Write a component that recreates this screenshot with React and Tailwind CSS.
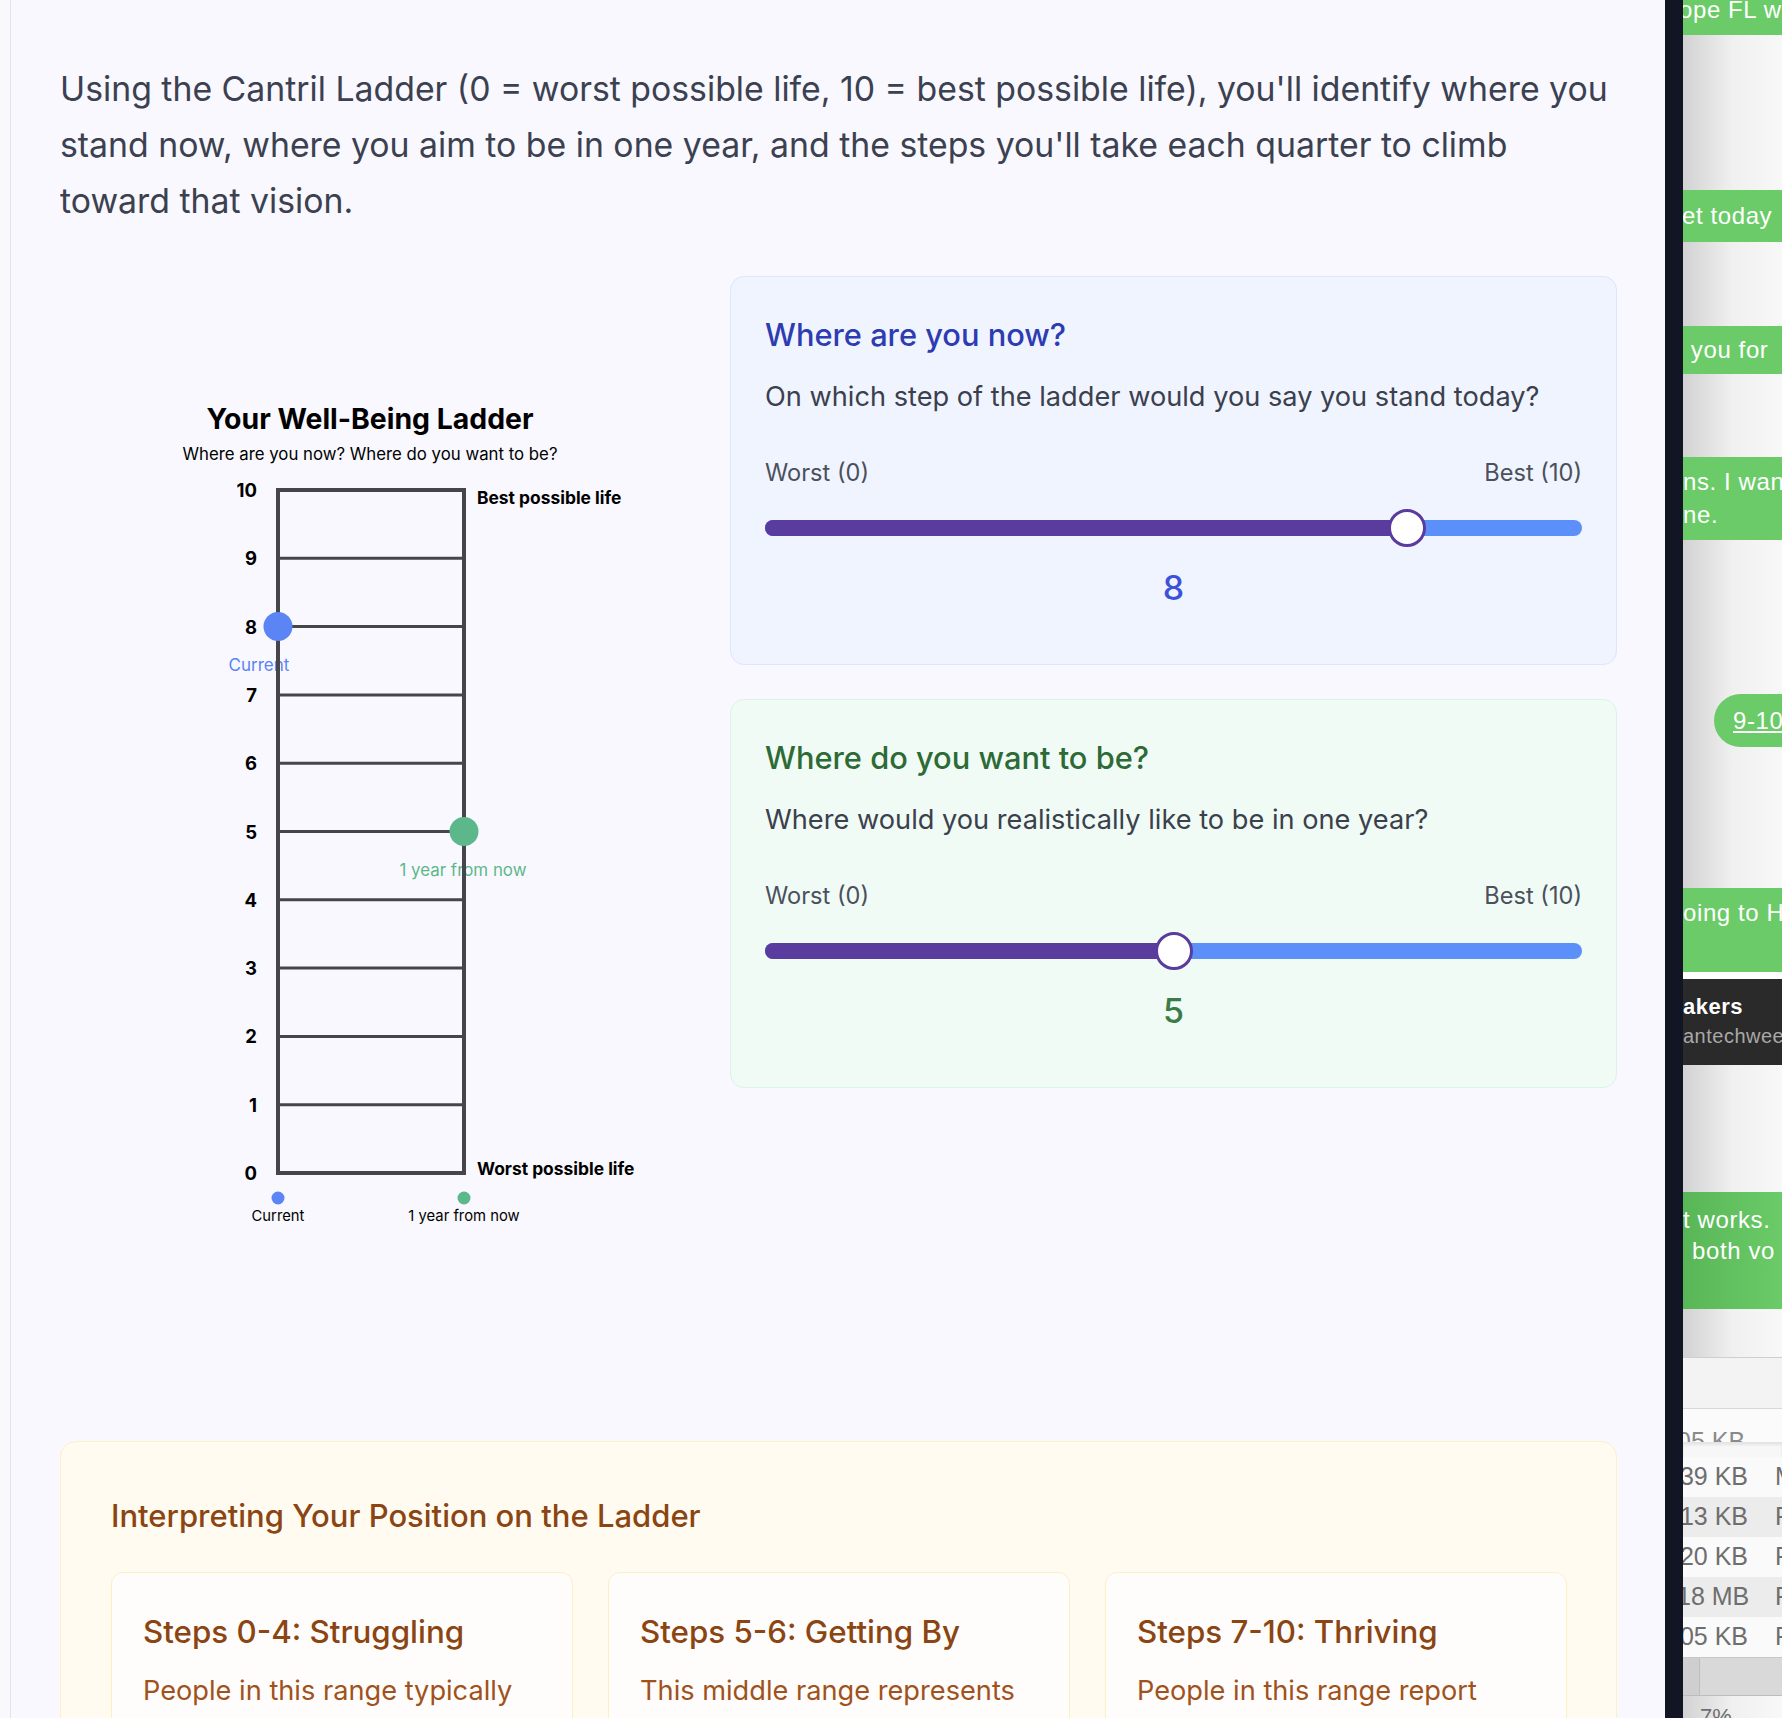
import React from "react";

const LEFT = 218;
const RIGHT = 404;
const TOP = 214;
const STEP = 68.3;
const INK = "#46464a";
const BLUE_DOT = "#5b84f4";
const GREEN_DOT = "#5cb88a";

function Ladder({ current, target }) {
  const y = (v) => TOP + (10 - v) * STEP;
  const steps = [0, 1, 2, 3, 4, 5, 6, 7, 8, 9, 10];
  return (
    <svg width="630" height="1117" viewBox="0 0 630 1117" className="block">
      <text x="310" y="142" textAnchor="middle" dominantBaseline="central" fontSize="28.4" fontWeight="700" fill="#000">Your Well-Being Ladder</text>
      <text x="310" y="178" textAnchor="middle" dominantBaseline="central" fontSize="16.8" fill="#000">Where are you now? Where do you want to be?</text>

      {steps.map((s) => (
        <text key={s} x="197" y={y(s)} textAnchor="end" dominantBaseline="central" fontSize="18.5" fontWeight="700" fill="#000">{s}</text>
      ))}

      {/* labels sit under the rails, as in the original */}
      <text x="199" y="389" textAnchor="middle" dominantBaseline="central" fontSize="17" fill={BLUE_DOT}>Current</text>
      <text x="403" y="594" textAnchor="middle" dominantBaseline="central" fontSize="16.9" fill={GREEN_DOT}>1 year from now</text>

      {steps.slice(1, 10).map((s) => (
        <line key={s} x1={LEFT} x2={RIGHT} y1={y(s)} y2={y(s)} stroke={INK} strokeWidth="3" />
      ))}
      <rect x={LEFT} y={TOP} width={RIGHT - LEFT} height={STEP * 10} fill="none" stroke={INK} strokeWidth="4" />

      <text x="417" y="221" dominantBaseline="central" fontSize="17.4" fontWeight="700" fill="#000">Best possible life</text>
      <text x="417" y="892" dominantBaseline="central" fontSize="17.4" fontWeight="700" fill="#000">Worst possible life</text>

      <circle cx={LEFT} cy={y(current)} r="14.5" fill={BLUE_DOT} />
      <circle cx={RIGHT} cy={y(target)} r="14.5" fill={GREEN_DOT} />

      <circle cx={LEFT} cy="922" r="6.5" fill={BLUE_DOT} />
      <text x={LEFT} y="940" textAnchor="middle" dominantBaseline="central" fontSize="14.8" fill="#000">Current</text>
      <circle cx={RIGHT} cy="922" r="6.5" fill={GREEN_DOT} />
      <text x={RIGHT} y="940" textAnchor="middle" dominantBaseline="central" fontSize="14.8" fill="#000">1 year from now</text>
    </svg>
  );
}

function Slider({ value }) {
  const pct = value / 10;
  // thumb travels inside the track like a native range input
  const left = `calc(${pct} * (100% - 38px))`;
  const fill = `calc(${pct} * (100% - 38px) + 19px)`;
  return (
    <div className="relative h-[38px]">
      <div className="absolute left-0 right-0 top-[11px] h-[16px] rounded-full bg-[#5b8ff9] overflow-hidden">
        <div className="h-full bg-[#5a3b9e]" style={{ width: fill }} />
      </div>
      <div className="absolute top-0 h-[38px] w-[38px] rounded-full bg-white border-[3.5px] border-[#5a3b9e]" style={{ left }} />
    </div>
  );
}

function QuestionCard({ tone, title, question, value }) {
  const styles = tone === "blue"
    ? { card: "bg-[#f0f4ff] border-[#dde6fd]", title: "text-[#2d3cb0]", value: "text-[#3b52d9]" }
    : { card: "bg-[#f0fbf5] border-[#daf4e6]", title: "text-[#2e6a36]", value: "text-[#3a7c45]" };
  return (
    <div className={`rounded-[14px] border-[1.5px] px-[34px] pt-[40px] pb-[56px] ${styles.card}`}>
      <h3 className={`text-[30.8px] leading-[36px] font-medium ${styles.title}`}>{title}</h3>
      <p className="mt-[24px] text-[27.2px] leading-[40px] text-[#3b404d]">{question}</p>
      <div className="mt-[40px] flex justify-between text-[23.6px] leading-[32px] text-[#4b505c]">
        <span>Worst (0)</span>
        <span>Best (10)</span>
      </div>
      <div className="mt-[20px]">
        <Slider value={value} />
      </div>
      <div className={`mt-[21px] text-center text-[34px] leading-[40px] font-medium ${styles.value}`}>{value}</div>
    </div>
  );
}

const RANGES = [
  { title: "Steps 0-4: Struggling", body: "People in this range typically experience high levels of daily stress and worry." },
  { title: "Steps 5-6: Getting By", body: "This middle range represents moderate satisfaction with life overall." },
  { title: "Steps 7-10: Thriving", body: "People in this range report high life satisfaction and positive outlook." },
];

const FILES = [
  { size: "39 KB", kind: "M", bg: "bg-[#fafafa]" },
  { size: "13 KB", kind: "P", bg: "bg-[#ececec]" },
  { size: "20 KB", kind: "P", bg: "bg-[#fafafa]" },
  { size: "18 MB", kind: "P", bg: "bg-[#ececec]" },
  { size: "05 KB", kind: "P", bg: "bg-[#fafafa]" },
];

function SidePeek() {
  const green = "bg-[#6bcb68] text-white";
  const big = "text-[24px] tracking-[0.6px] whitespace-nowrap";
  return (
    <div className="w-[99px] h-full overflow-hidden bg-gradient-to-r from-[#d2d2d2] via-[#f0f0f0] to-[#f8f8f8] [font-family:'Liberation_Sans',Arial,sans-serif]">
      <div className={`h-[36px] ${green} ${big} leading-[22px] -ml-[4px] -mt-[1px]`}>ope FL w</div>
      <div className="h-[155px]" />
      <div className={`h-[52px] ${green} ${big} flex items-center -ml-[1px]`}>et today</div>
      <div className="h-[84px]" />
      <div className={`h-[48px] ${green} ${big} flex items-center -ml-[8px]`}>r you for</div>
      <div className="h-[83px]" />
      <div className={`h-[83px] ${green} ${big} pt-[8px] leading-[33px]`}>
        <div>ns. I wan</div>
        <div>ne.</div>
      </div>
      <div className="h-[154px]" />
      <div className={`h-[53px] ml-[31px] rounded-l-full ${green} ${big} flex items-center pl-[19px] underline`}>9-10</div>
      <div className="h-[141px]" />
      <div className={`h-[84px] ${green} ${big} pt-[12px] leading-[26px]`}>oing to H</div>
      <div className="h-[7px] bg-white" />
      <div className="h-[86px] bg-[#2a2a2a] pt-[14px] whitespace-nowrap tracking-[0.5px]">
        <div className="text-[22px] leading-[28px] font-bold text-white">akers</div>
        <div className="text-[20px] leading-[30px] text-[#a8a8a8]">antechwee</div>
      </div>
      <div className="h-[127px]" />
      <div className={`h-[117px] bg-gradient-to-r from-[#59b657] to-[#6bcb68] text-white pt-[12px] ${big} leading-[31px]`}>
        <div>t works.</div>
        <div className="pl-[9px]">both vo</div>
      </div>
      <div className="h-[48px]" />
      <div className="h-[51px] border-t border-[#cfcfcf] bg-[#f3f3f3]" />
      <div className="h-[34px] border-t border-[#d8d8d8] bg-[#fbfbfb] overflow-hidden">
        <div className="mt-[20px] -ml-[6px] text-[25px] leading-[24px] text-[#8a8a8a] whitespace-nowrap">05 KB</div>
      </div>
      <div className="h-[15px] bg-[#f7f7f7] shadow-[inset_0_3px_3px_rgba(0,0,0,0.08)]" />
      {FILES.map((f) => (
        <div key={f.size} className={`h-[40px] flex items-center -ml-[6px] text-[25px] text-[#6e6e6e] whitespace-nowrap ${f.bg}`}>
          <span className="w-[98px] shrink-0 text-right pr-[27px]">{f.size}</span>
          <span>{f.kind}</span>
        </div>
      ))}
      <div className="h-[38px] bg-[#d9d9d9] border-t border-[#c8c8c8] flex">
        <div className="w-[17px] border-r border-[#bdbdbd] bg-[#cfcfcf]" />
      </div>
      <div className="border-t border-[#bdbdbd] pl-[17px] pt-[4px] text-[22px] text-[#6e6e6e]">7%</div>
    </div>
  );
}

export default function App() {
  return (
    <div className="flex h-[1718px] w-full overflow-hidden bg-[#f8f8fd] [font-family:Inter,ui-sans-serif,sans-serif]">
      <div className="w-[11px] shrink-0 bg-[#f9f9fc] border-r-[1.5px] border-[#e2e3ea]" />

      <main className="flex-1 min-w-0 bg-[#f8f8fe] pl-[49px] pr-[48px] pt-[61px]">
        <p className="max-w-[1552px] text-[33.8px] leading-[56px] text-[#3b4150]">
          Using the Cantril Ladder (0 = worst possible life, 10 = best possible life), you'll identify where you stand now, where you aim to be in one year, and the steps you'll take each quarter to climb toward that vision.
        </p>

        <div className="mt-[47px] flex gap-[40px]">
          <div className="w-[630px] shrink-0">
            <Ladder current={8} target={5} />
          </div>
          <div className="flex-1 flex flex-col gap-[34px]">
            <QuestionCard tone="blue" title="Where are you now?" question="On which step of the ladder would you say you stand today?" value={8} />
            <QuestionCard tone="green" title="Where do you want to be?" question="Where would you realistically like to be in one year?" value={5} />
          </div>
        </div>

        <section className="mt-[48px] rounded-[16px] border-[1.5px] border-[#fcf0c8] bg-[#fffbf0] pl-[50px] pr-[49px] pt-[56px] pb-[40px]">
          <h2 className="text-[31px] leading-[36px] font-medium text-[#8a4513]">Interpreting Your Position on the Ladder</h2>
          <div className="mt-[38px] grid grid-cols-3 gap-[35px]">
            {RANGES.map((r) => (
              <div key={r.title} className="rounded-[12px] border-[1.5px] border-[#fcefc4] bg-[#fffdfb] px-[31px] pt-[41px] pb-[40px]">
                <h3 className="text-[31.3px] leading-[36px] font-medium text-[#8a4513]">{r.title}</h3>
                <p className="mt-[21px] pr-[12px] text-[27.2px] leading-[40px] text-[#a0521d]">{r.body}</p>
              </div>
            ))}
          </div>
        </section>
      </main>

      <div className="w-[18px] shrink-0 bg-[#121624]" />
      <SidePeek />
    </div>
  );
}
